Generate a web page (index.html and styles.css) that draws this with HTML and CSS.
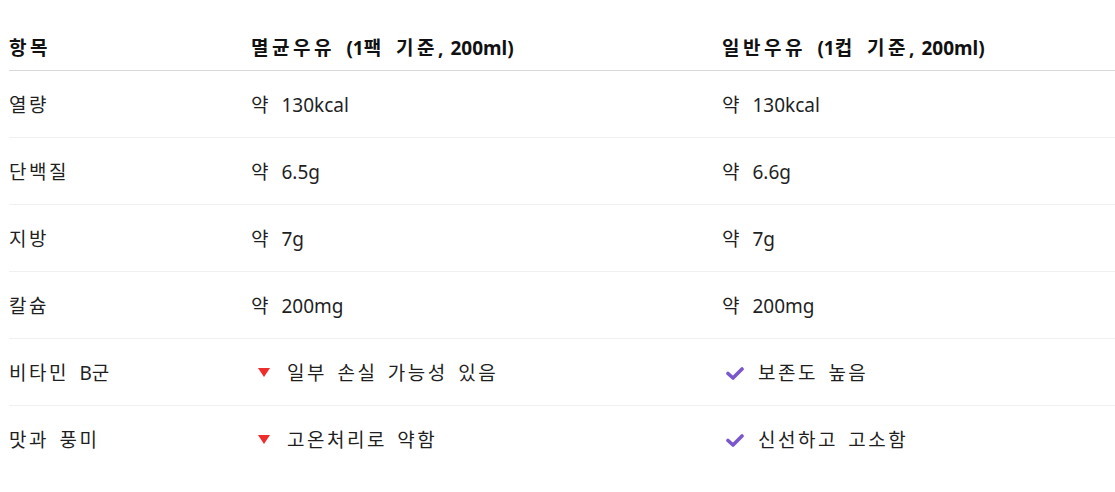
FILE: index.html
```html
<!DOCTYPE html>
<html lang="ko">
<head>
    <meta charset="UTF-8">
    <title>멸균우유 vs 일반우유</title>
    <link rel="stylesheet" href="styles.css">
</head>
<body>
    <table class="compare">
        <thead>
            <tr>
                <th class="col-item">항목</th>
                <th class="col-a">멸균우유 <span class="num">(1</span>팩 기준<span class="num">, 200ml)</span></th>
                <th>일반우유 <span class="num">(1</span>컵 기준<span class="num">, 200ml)</span></th>
            </tr>
        </thead>
        <tbody>
            <tr><td>열량</td><td>약 <span class="num">130kcal</span></td><td>약 <span class="num">130kcal</span></td></tr>
            <tr><td>단백질</td><td>약 <span class="num">6.5g</span></td><td>약 <span class="num">6.6g</span></td></tr>
            <tr><td>지방</td><td>약 <span class="num">7g</span></td><td>약 <span class="num">7g</span></td></tr>
            <tr><td>칼슘</td><td>약 <span class="num">200mg</span></td><td>약 <span class="num">200mg</span></td></tr>
            <tr>
                <td>비타민 <span class="num">B</span>군</td>
                <td><span class="mark down"><svg viewBox="0 0 12 10"><path d="M0 0H12L6 9Z"/></svg></span>일부 손실 가능성 있음</td>
                <td><span class="mark ok"><svg viewBox="0 0 20 14"><path d="M3 7.5L8 12L17 3"/></svg></span>보존도 높음</td>
            </tr>
            <tr>
                <td>맛과 풍미</td>
                <td><span class="mark down"><svg viewBox="0 0 12 10"><path d="M0 0H12L6 9Z"/></svg></span>고온처리로 약함</td>
                <td><span class="mark ok"><svg viewBox="0 0 20 14"><path d="M3 7.5L8 12L17 3"/></svg></span>신선하고 고소함</td>
            </tr>
        </tbody>
    </table>
</body>
</html>
```

FILE: styles.css
```css
body {
    margin: 0;
    padding: 24px 0 0 9px;
    background: #ffffff;
    color: #1f1f1f;
    font-family: "Noto Sans", "Noto Sans CJK KR", sans-serif;
    font-size: 19px;
}

.compare {
    width: 1120px;
    border-collapse: collapse;
    table-layout: fixed;
}

.compare th,
.compare td {
    padding: 0;
    text-align: left;
    vertical-align: middle;
    white-space: nowrap;
    letter-spacing: 2.5px;
    word-spacing: 3px;
}

.compare th {
    height: 46px;
    font-weight: bold;
    color: #111111;
    border-bottom: 1px solid #d9d9d9;
    letter-spacing: 3.5px;
}

.compare .num {
    letter-spacing: 0;
    word-spacing: 0;
}

.compare th .num {
    word-spacing: 2px;
}

.compare .col-item {
    width: 242px;
}

.compare .col-a {
    width: 471px;
}

.compare td {
    height: 66px;
    border-bottom: 1px solid #f0f0f0;
}

.compare tbody tr:last-child td {
    border-bottom: none;
}

.mark {
    display: inline-block;
    vertical-align: middle;
    margin-top: -3px;
}

.mark svg {
    display: block;
}

.mark.down {
    margin-left: 7px;
    margin-right: 17px;
}

.mark.down svg {
    width: 12px;
    height: 10px;
    fill: #f02d2d;
}

.mark.ok {
    margin-left: 3px;
    margin-right: 13px;
}

.mark.ok svg {
    width: 20px;
    height: 14px;
    fill: none;
    stroke: #7b57cc;
    stroke-width: 3.6;
    stroke-linecap: round;
    stroke-linejoin: round;
}
```
